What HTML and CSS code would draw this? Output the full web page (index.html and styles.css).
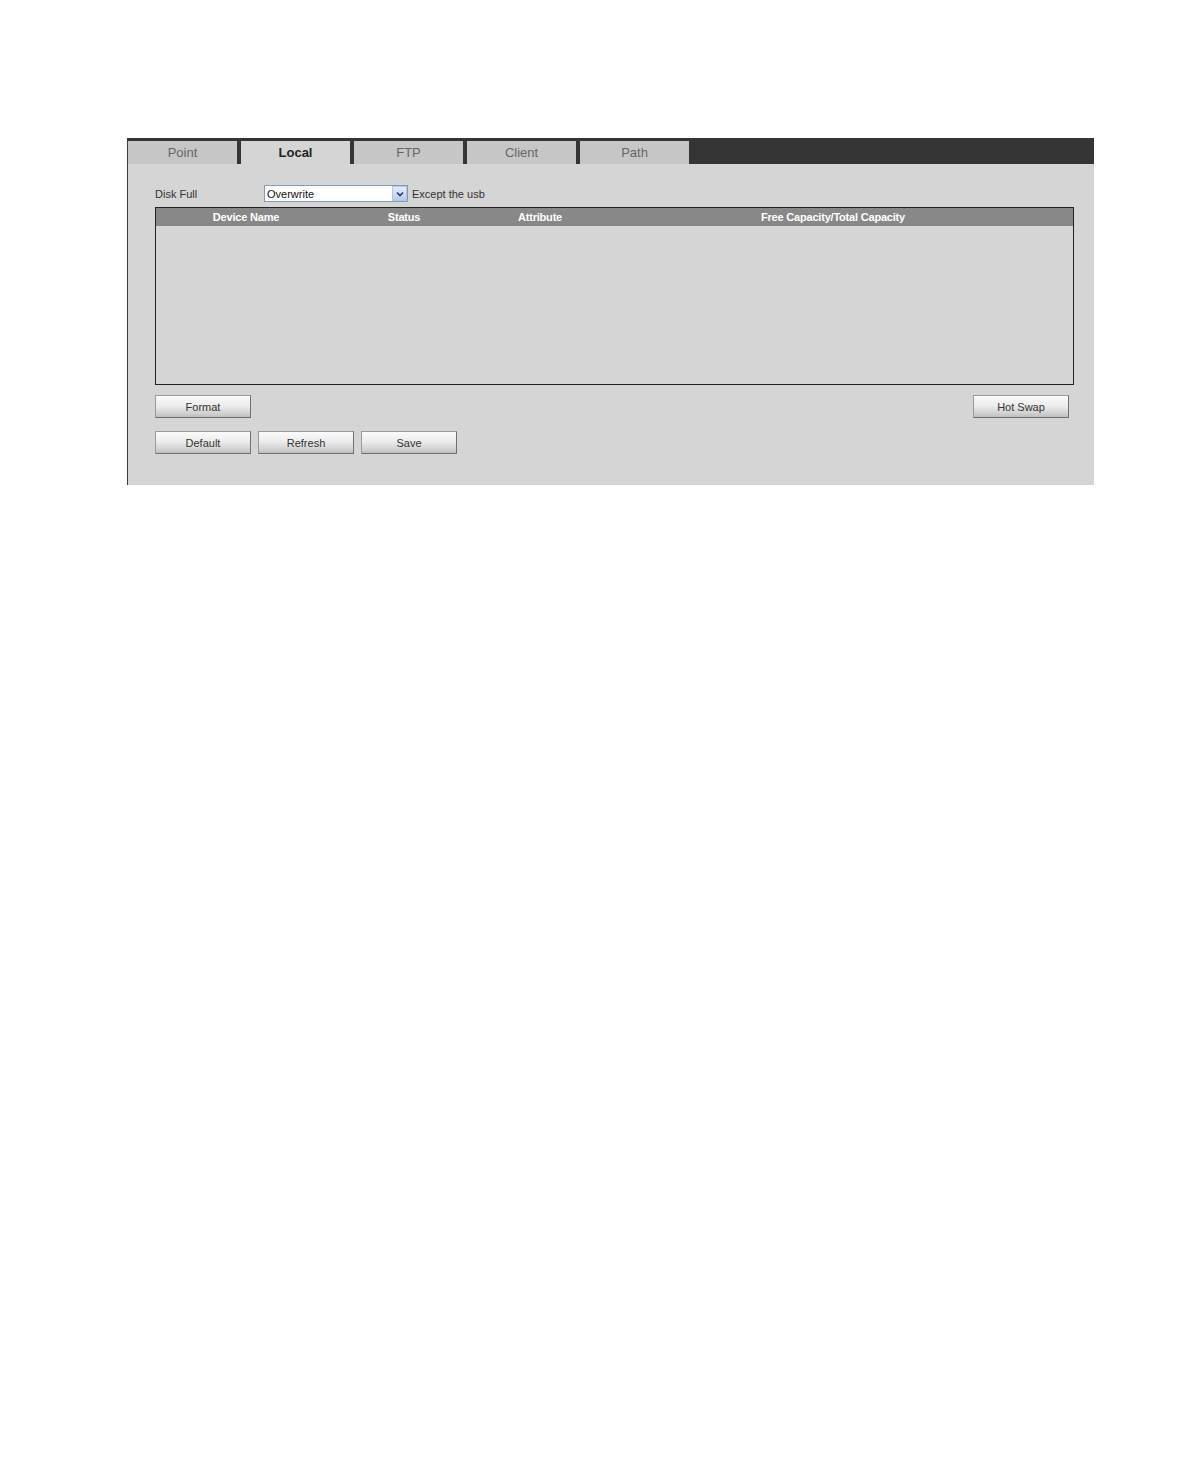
FILE: index.html
```html
<!DOCTYPE html>
<html>
<head>
<meta charset="utf-8">
<title>Storage - Local</title>
<link rel="stylesheet" href="styles.css">
</head>
<body>
<div class="panel">
  <div class="tabbar">
    <div class="tab">Point</div>
    <div class="tab active">Local</div>
    <div class="tab">FTP</div>
    <div class="tab">Client</div>
    <div class="tab">Path</div>
  </div>
  <div class="content">
    <div class="form-row">
      <span class="label">Disk Full</span>
      <div class="select">
        <span class="select-value">Overwrite</span>
        <span class="select-arrow">
          <svg width="8" height="6" viewBox="0 0 8 6"><path d="M1 1.5 L4 4.5 L7 1.5" fill="none" stroke="#1f3c6e" stroke-width="1.6"/></svg>
        </span>
      </div>
      <span class="hint">Except the usb</span>
    </div>
    <div class="table">
      <div class="thead">
        <span class="col c1">Device Name</span>
        <span class="col c2">Status</span>
        <span class="col c3">Attribute</span>
        <span class="col c4">Free Capacity/Total Capacity</span>
      </div>
      <div class="tbody"></div>
    </div>
    <div class="btn-row split">
      <button class="btn">Format</button>
      <button class="btn">Hot Swap</button>
    </div>
    <div class="btn-row">
      <button class="btn">Default</button>
      <button class="btn">Refresh</button>
      <button class="btn">Save</button>
    </div>
  </div>
</div>
</body>
</html>
```
FILE: styles.css
```css
html, body {
  margin: 0;
  padding: 0;
  background: #ffffff;
}
body {
  font-family: "Liberation Sans", Arial, sans-serif;
  font-size: 12px;
  color: #333333;
}
.panel {
  margin: 138px 0 0 127px;
  width: 967px;
  height: 347px;
  background: #d5d5d5;
  border-left: 1px solid #3a3a3a;
  box-sizing: border-box;
}
.tabbar {
  height: 26px;
  box-sizing: border-box;
  padding-top: 3px;
  background: #353535;
  display: flex;
  gap: 4px;
}
.tab {
  width: 109px;
  height: 23px;
  background: #c6c6c6;
  color: #666666;
  font-size: 13px;
  display: flex;
  align-items: center;
  justify-content: center;
  box-sizing: border-box;
}
.tab.active {
  background: #d5d5d5;
  color: #222222;
  font-weight: bold;
}
.content {
  padding: 21px 0 0 27px;
}
.form-row {
  display: flex;
  align-items: center;
  height: 17px;
}
.label {
  width: 109px;
  font-size: 11px;
  color: #333333;
}
.select {
  width: 144px;
  height: 17px;
  box-sizing: border-box;
  border: 1px solid #7f9db9;
  background: #ffffff;
  display: flex;
  align-items: center;
  justify-content: space-between;
}
.select-value {
  padding-left: 2px;
  font-size: 11px;
  color: #111111;
}
.select-arrow {
  width: 15px;
  height: 15px;
  box-sizing: border-box;
  border: 1px solid #b4c6e6;
  background: linear-gradient(#e4ecfa, #b9cbef);
  display: flex;
  align-items: center;
  justify-content: center;
}
.hint {
  margin-left: 4px;
  font-size: 11px;
  color: #333333;
}
.table {
  margin-top: 5px;
  width: 919px;
  height: 178px;
  box-sizing: border-box;
  border: 1px solid #222222;
}
.thead {
  height: 18px;
  background: #888888;
  display: flex;
  align-items: center;
  color: #ffffff;
  font-weight: bold;
  font-size: 11px;
  letter-spacing: -0.2px;
}
.col {
  text-align: center;
}
.c1 { width: 180px; }
.c2 { width: 136px; }
.c3 { width: 136px; }
.c4 { width: 450px; }
.btn-row {
  display: flex;
  gap: 7px;
  margin-top: 10px;
  width: 914px;
}
.btn-row + .btn-row {
  margin-top: 13px;
}
.btn-row.split {
  justify-content: space-between;
}
.btn {
  width: 96px;
  height: 23px;
  box-sizing: border-box;
  border: 1px solid #707070;
  border-top-color: #9a9a9a;
  border-left-color: #9a9a9a;
  background: linear-gradient(#fbfbfb 0%, #ececec 45%, #cfcfcf 85%, #bdbdbd 100%);
  font-family: "Liberation Sans", Arial, sans-serif;
  font-size: 11px;
  color: #333333;
  padding: 0;
}
```
